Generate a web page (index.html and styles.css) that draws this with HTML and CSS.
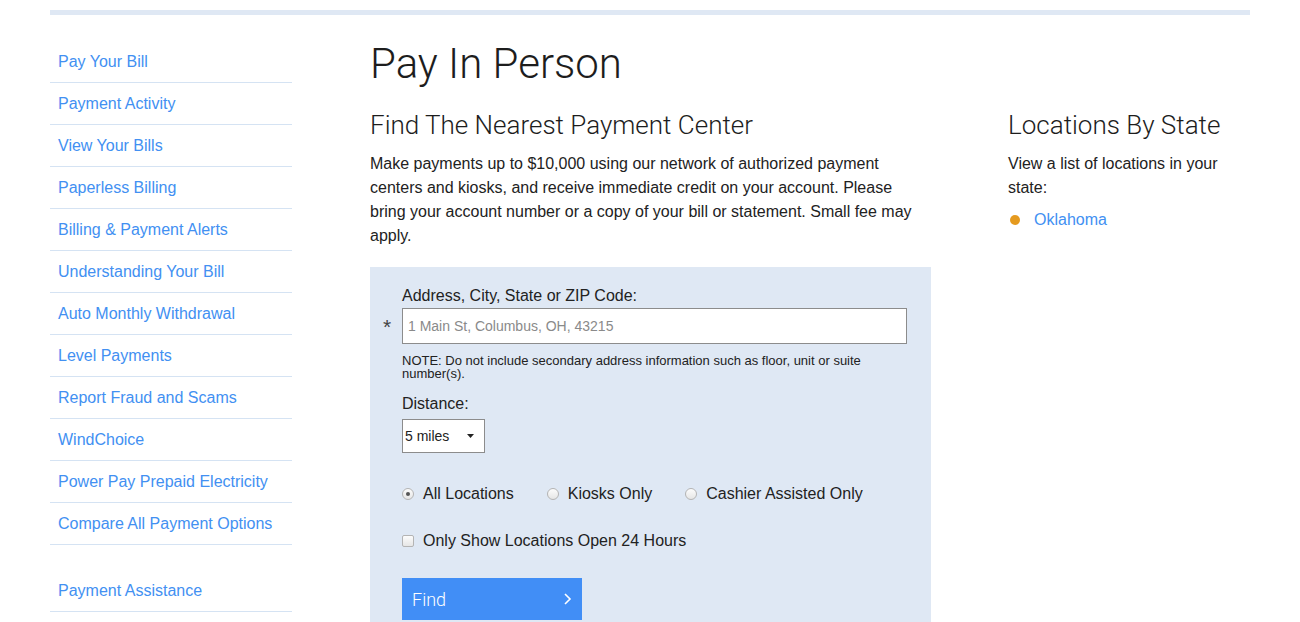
FILE: index.html
```html
<!DOCTYPE html>
<html lang="en">
<head>
  <meta charset="UTF-8">
  <meta name="viewport" content="width=device-width, initial-scale=1.0">
  <title>Pay In Person</title>
  <link rel="stylesheet" href="styles.css">
</head>
<body>
  <div class="topbar"></div>

  <div class="layout">
    <nav class="sidebar">
      <ul class="side-nav">
        <li><a href="#">Pay Your Bill</a></li>
        <li><a href="#">Payment Activity</a></li>
        <li><a href="#">View Your Bills</a></li>
        <li><a href="#">Paperless Billing</a></li>
        <li><a href="#">Billing &amp; Payment Alerts</a></li>
        <li><a href="#">Understanding Your Bill</a></li>
        <li><a href="#">Auto Monthly Withdrawal</a></li>
        <li><a href="#">Level Payments</a></li>
        <li><a href="#">Report Fraud and Scams</a></li>
        <li><a href="#">WindChoice</a></li>
        <li><a href="#">Power Pay Prepaid Electricity</a></li>
        <li><a href="#">Compare All Payment Options</a></li>
      </ul>
      <ul class="side-nav side-nav-extra">
        <li><a href="#">Payment Assistance</a></li>
      </ul>
    </nav>

    <main class="main">
      <h1>Pay In Person</h1>
      <h2>Find The Nearest Payment Center</h2>
      <p class="intro">Make payments up to $10,000 using our network of authorized payment centers and kiosks, and receive immediate credit on your account. Please bring your account number or a copy of your bill or statement. Small fee may apply.</p>

      <form class="finder">
        <label class="field-label" for="address">Address, City, State or ZIP Code:</label>
        <div class="field-row">
          <span class="required">*</span>
          <input type="text" id="address" placeholder="1 Main St, Columbus, OH, 43215">
        </div>
        <p class="note">NOTE: Do not include secondary address information such as floor, unit or suite number(s).</p>

        <label class="field-label" for="distance">Distance:</label>
        <div class="select">
          <span>5 miles</span>
          <svg width="7" height="4" viewBox="0 0 7 4"><path d="M0 0h7L3.5 4z" fill="#222"/></svg>
        </div>

        <div class="radios">
          <label><input type="radio" name="type" checked> All Locations</label>
          <label><input type="radio" name="type"> Kiosks Only</label>
          <label><input type="radio" name="type"> Cashier Assisted Only</label>
        </div>

        <label class="check"><input type="checkbox"> Only Show Locations Open 24 Hours</label>

        <button type="button" class="find-btn">
          <span>Find</span>
          <svg width="9" height="14" viewBox="0 0 9 14"><path d="M2 2l5 5-5 5" fill="none" stroke="#fff" stroke-width="1.6"/></svg>
        </button>
      </form>
    </main>

    <aside class="aside">
      <h2>Locations By State</h2>
      <p>View a list of locations in your state:</p>
      <ul class="states">
        <li><a href="#">Oklahoma</a></li>
      </ul>
    </aside>
  </div>
</body>
</html>
```

FILE: styles.css
```css
body {
  margin: 0;
  font-family: "Liberation Sans", Arial, sans-serif;
  color: #222;
  background: #fff;
  overflow: hidden;
}

a {
  color: #4290f2;
  text-decoration: none;
}

.topbar {
  height: 5px;
  margin: 10px 50px 0;
  background: #dfe8f4;
}

.layout {
  display: flex;
  padding: 0 50px;
}

/* left navigation */
.sidebar {
  width: 242px;
  padding-top: 26px;
  flex-shrink: 0;
}

.side-nav {
  list-style: none;
  margin: 0;
  padding: 0;
}

.side-nav li {
  height: 41px;
  display: flex;
  align-items: center;
  padding-left: 8px;
  border-bottom: 1px solid #d5e3f3;
  font-size: 16px;
}

.side-nav-extra {
  margin-top: 25px;
}

/* main column */
.main {
  width: 561px;
  margin-left: 78px;
  flex-shrink: 0;
}

h1 {
  font-family: Roboto, "Liberation Sans", sans-serif;
  font-weight: 300;
  font-size: 42px;
  margin: 25px 0 0;
  line-height: 48px;
  color: #1d1d1d;
}

h2 {
  font-family: Roboto, "Liberation Sans", sans-serif;
  font-weight: 300;
  font-size: 26px;
  line-height: 32px;
  margin: 21px 0 0;
  color: #1d1d1d;
}

.intro {
  font-size: 16px;
  line-height: 24px;
  margin: 11px 0 0;
}

/* search form */
.finder {
  margin-top: 19px;
  background: #dfe8f4;
  padding: 20px 24px 40px 32px;
  font-size: 16px;
}

.field-label {
  display: block;
  line-height: 18px;
}

.field-row {
  position: relative;
  margin-top: 3px;
}

.required {
  position: absolute;
  left: -19px;
  top: 9px;
  font-size: 21px;
  line-height: 20px;
  color: #444;
}

.field-row input {
  box-sizing: border-box;
  width: 505px;
  height: 36px;
  border: 1px solid #8c8c8c;
  padding: 0 5px;
  font: 14px "Liberation Sans", Arial, sans-serif;
  color: #333;
  background: #fff;
  outline: none;
}

.field-row input::placeholder {
  color: #8a8a8a;
}

.note {
  font-size: 13px;
  line-height: 13px;
  margin: 10px 0 15px;
  padding-right: 20px;
}

.select {
  box-sizing: border-box;
  width: 83px;
  height: 34px;
  margin-top: 6px;
  border: 1px solid #8c8c8c;
  background: #fff;
  display: flex;
  align-items: center;
  justify-content: space-between;
  padding: 0 10px 0 2px;
  font-size: 14px;
}

.radios {
  display: flex;
  gap: 33px;
  margin-top: 31px;
}

.radios label,
.check {
  display: flex;
  align-items: center;
  line-height: 20px;
}

.check {
  margin-top: 27px;
}

input[type="radio"],
input[type="checkbox"] {
  appearance: none;
  box-sizing: border-box;
  width: 12px;
  height: 12px;
  margin: 0 9px 0 0;
  border: 1px solid #b4b4b4;
  background: linear-gradient(#fcfcfc, #e6e6e6);
  position: relative;
}

input[type="radio"] {
  border-radius: 50%;
}

input[type="checkbox"] {
  border-radius: 2px;
}

input[type="radio"]:checked::after {
  content: "";
  position: absolute;
  left: 3px;
  top: 3px;
  width: 4px;
  height: 4px;
  border-radius: 50%;
  background: #555;
}

.find-btn {
  margin-top: 27px;
  width: 180px;
  height: 42px;
  border: 0;
  background: #418ef6;
  color: #fff;
  display: flex;
  align-items: center;
  justify-content: space-between;
  padding: 0 10px 0 10px;
  font-family: Roboto, "Liberation Sans", sans-serif;
  font-weight: 300;
  font-size: 18px;
  cursor: pointer;
}

/* right column */
.aside {
  width: 242px;
  margin-left: 77px;
  padding-top: 94px;
}

.aside h2 {
  margin: 0;
}

.aside p {
  font-size: 16px;
  line-height: 24px;
  margin: 11px 0 0;
}

.states {
  list-style: none;
  margin: 8px 0 0;
  padding: 0;
}

.states li {
  display: flex;
  align-items: center;
  font-size: 16px;
  line-height: 24px;
}

.states li::before {
  content: "";
  width: 10px;
  height: 10px;
  border-radius: 50%;
  background: #e59a1f;
  margin: 0 14px 0 2px;
}
```
